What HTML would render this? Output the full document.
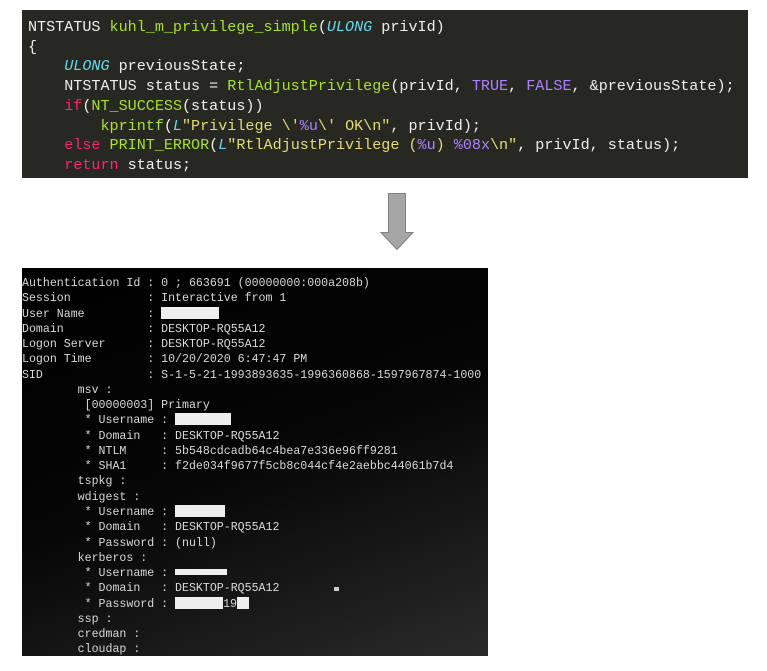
<!DOCTYPE html><html><head><style>
body{margin:0;width:767px;height:671px;background:#fff;position:relative;overflow:hidden}
.code{position:absolute;left:22px;top:10px;width:726px;height:168px;background:#272822;font-family:"Liberation Mono",monospace;font-size:15.1px;line-height:19.7px;color:#f0f0ea;white-space:pre;padding-top:8px;box-sizing:border-box}
.code div{padding-left:6px}
.f{color:#a6e22e}.t{color:#66d9ef;font-style:italic}.k{color:#f92672}.s{color:#e6db74}.c{color:#ae81ff}
.term{position:absolute;left:22px;top:268px;width:466px;height:388px;background:linear-gradient(160deg,#000 0%,#060606 50%,#2a2a2a 100%);font-family:"Liberation Mono",monospace;font-size:11.6px;line-height:15.27px;color:#d8d8d8;white-space:pre;padding-top:8px;box-sizing:border-box}
.r{display:inline-block;background:#eee;height:12px;vertical-align:-2px}
</style></head><body>
<div class="code"><div>NTSTATUS <span class="f">kuhl_m_privilege_simple</span>(<span class="t">ULONG</span> privId)</div><div>{</div><div>    <span class="t">ULONG</span> previousState;</div><div>    NTSTATUS status = <span class="f">RtlAdjustPrivilege</span>(privId, <span class="c">TRUE</span>, <span class="c">FALSE</span>, &amp;previousState);</div><div>    <span class="k">if</span>(<span class="f">NT_SUCCESS</span>(status))</div><div>        <span class="f">kprintf</span>(<span class="t">L</span><span class="s">"Privilege \'<span class="c">%u</span>\' OK\n"</span>, privId);</div><div>    <span class="k">else</span> <span class="f">PRINT_ERROR</span>(<span class="t">L</span><span class="s">"RtlAdjustPrivilege (<span class="c">%u</span>) <span class="c">%08x</span>\n"</span>, privId, status);</div><div>    <span class="k">return</span> status;</div></div>
<svg style="position:absolute;left:380px;top:192px" width="34" height="60"><path d="M6.5 1.5h17v39h7.5L15 57.5 -1 40.5h7.5z" transform="translate(2,0)" fill="#a6a6a6" stroke="#7f7f7f" stroke-width="1"/></svg>
<div class="term">Authentication Id : 0 ; 663691 (00000000:000a208b)
Session           : Interactive from 1
User Name         : <span class="r" style="width:58px"></span>
Domain            : DESKTOP-RQ55A12
Logon Server      : DESKTOP-RQ55A12
Logon Time        : 10/20/2020 6:47:47 PM
SID               : S-1-5-21-1993893635-1996360868-1597967874-1000
        msv :
         [00000003] Primary
         * Username : <span class="r" style="width:56px"></span>
         * Domain   : DESKTOP-RQ55A12
         * NTLM     : 5b548cdcadb64c4bea7e336e96ff9281
         * SHA1     : f2de034f9677f5cb8c044cf4e2aebbc44061b7d4
        tspkg :
        wdigest :
         * Username : <span class="r" style="width:50px"></span>
         * Domain   : DESKTOP-RQ55A12
         * Password : (null)
        kerberos :
         * Username : <span class="r" style="width:52px;height:6px;vertical-align:1px"></span>
         * Domain   : DESKTOP-RQ55A12                    <span style="display:inline-block;width:5px;height:4px;background:#ccc;margin-left:-85px"></span>
         * Password : <span class="r" style="width:48px"></span>19<span class="r" style="width:12px"></span>
        ssp :
        credman :
        cloudap :</div>
</body></html>
